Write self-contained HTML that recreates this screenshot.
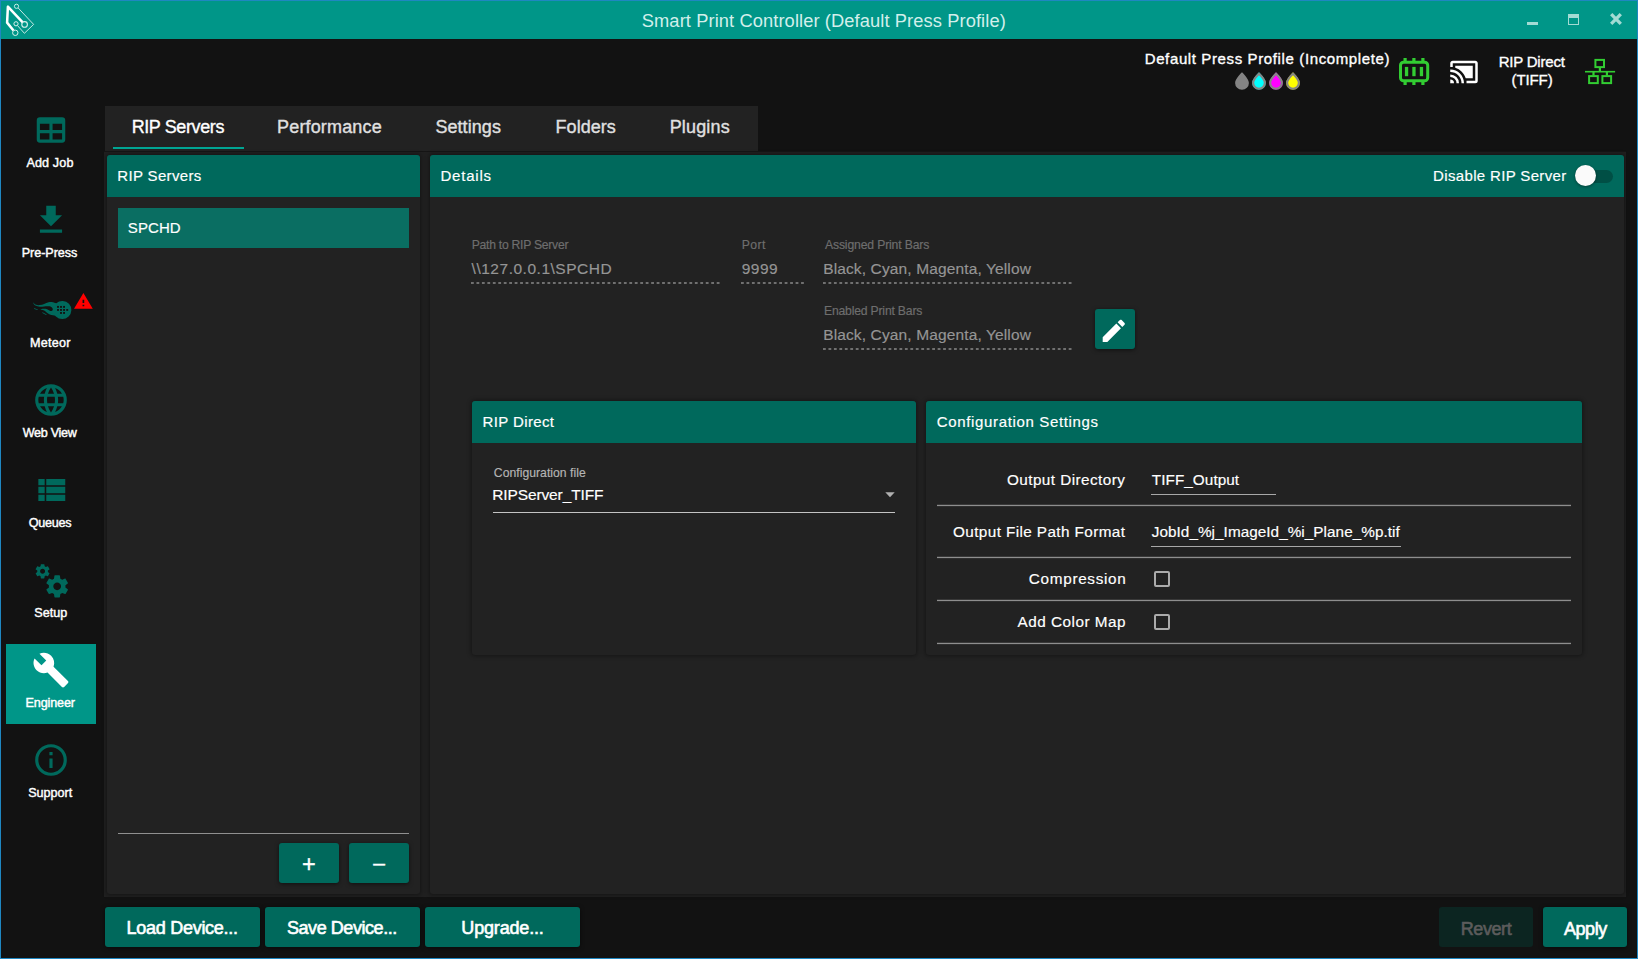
<!DOCTYPE html>
<html lang="en">
<head>
<meta charset="utf-8">
<title>Smart Print Controller (Default Press Profile)</title>
<style>
*{box-sizing:border-box;margin:0;padding:0}
html,body{width:1638px;height:959px;overflow:hidden;background:#121212}
body{font-family:"Liberation Sans",sans-serif;color:#fff;position:relative}
.a{position:absolute}
.t{position:absolute;white-space:nowrap;line-height:1}
svg{position:absolute;overflow:visible}
#frame{position:absolute;left:0;top:0;width:1638px;height:959px;border:1px solid #1f87c1;z-index:50}
#titlebar{left:1px;top:1px;width:1636px;height:38px;background:#009688}
.card{position:absolute;background:#222;border-radius:3px;box-shadow:0 0 4px 1px rgba(0,0,0,.38)}
.hd{position:absolute;left:0;top:0;right:0;height:42px;background:#00695c;border-radius:3px 3px 0 0}
.btn{position:absolute;background:#00695c;border-radius:3px;box-shadow:0 1px 4px rgba(0,0,0,.55)}
.dot{position:absolute;height:2px;background:repeating-linear-gradient(90deg,#6c6c6c 0,#6c6c6c 2.8px,transparent 2.8px,transparent 5.46px)}
.row{position:absolute;left:937px;width:634px;height:1px;background:#8e8e8e;box-shadow:0 -1px 0 rgba(142,142,142,.22),0 1px 0 rgba(142,142,142,.12)}
.ul{position:absolute;height:1px;background:#a8a8a8}
.cb{position:absolute;left:1154px;width:16px;height:16px;border:2px solid #ababab;border-radius:2px}
</style>
</head>
<body>
<div class="a" id="titlebar"></div>
<svg style="left:0;top:0" width="44" height="40" viewBox="0 0 44 40" fill="none" stroke="#fff" stroke-linejoin="miter">
<path d="M22.7,22.4 L7.9,6.6 L7.1,22.6 L13.5,30.5" stroke-width="2.5" stroke-linejoin="round"/>
<circle cx="15.3" cy="32.8" r="2.7" stroke-width="1" stroke="#d9f2ee"/>
<circle cx="24.6" cy="24.4" r="2.8" stroke-width="1.1" stroke="#d9f2ee"/>
<circle cx="16.5" cy="6.3" r="2.1" stroke-width="0.9" stroke="#d9f2ee"/>
<circle cx="16" cy="23.8" r="2.1" stroke-width="1" stroke="#d9f2ee"/>
<path d="M18.2,8 L33.6,24.4 L24.4,33.3 L17.5,25.6" stroke-width="0.9" stroke="#d9f2ee"/>
</svg><div class="a" style="left:1527px;top:21.6px;width:11px;height:3.7px;background:#a3dbd4"></div>
<div class="a" style="left:1568px;top:14px;width:11px;height:11px;border:1px solid #a3dbd4;border-top-width:4px"></div>
<svg style="left:1610px;top:13px" width="12" height="12" viewBox="0 0 12 12"><path d="M1.2,1.2 L10.8,10.8 M10.8,1.2 L1.2,10.8" stroke="#a3dbd4" stroke-width="3.3" fill="none"/></svg>
<svg style="left:1396px;top:55px" width="36" height="34" viewBox="1396 55 36 34">
<rect x="1400.5" y="62.3" width="27.2" height="18.4" rx="3" fill="none" stroke="#32cd32" stroke-width="3"/>
<g fill="#32cd32">
<rect x="1403.5" y="58" width="3.2" height="4"/><rect x="1412.3" y="58" width="3.2" height="4"/><rect x="1421.3" y="58" width="3.2" height="4"/>
<rect x="1403.5" y="81" width="3.2" height="4"/><rect x="1412.3" y="81" width="3.2" height="4"/><rect x="1421.3" y="81" width="3.2" height="4"/>
<rect x="1404.9" y="66.9" width="3.3" height="9.3"/><rect x="1412.3" y="66.9" width="3.3" height="9.3"/><rect x="1419.8" y="66.9" width="3.3" height="9.3"/>
</g></svg><svg style="left:1449.00px;top:56.75px" width="30" height="30" viewBox="0 0 24 24"><path fill="#fff" d="M21,3H3C1.89,3 1,3.89 1,5V8H3V5H21V19H14V21H21A2,2 0 0,0 23,19V5C23,3.89 22.1,3 21,3M1,10V12A9,9 0 0,1 10,21H12C12,14.92 7.07,10 1,10M19,7H5V8.63C8.96,9.91 12.09,13.04 13.37,17H19M1,14V16A5,5 0 0,1 6,21H8A7,7 0 0,0 1,14M1,18V21H4A3,3 0 0,0 1,18Z"/></svg><svg style="left:1580px;top:55px" width="40" height="34" viewBox="1580 55 40 34">
<g fill="none" stroke="#32cd32" stroke-width="2">
<rect x="1595.4" y="59.9" width="8.6" height="7.2"/>
<rect x="1589.1" y="76.1" width="8.7" height="7"/>
<rect x="1602.4" y="76.1" width="8.7" height="7"/>
</g>
<g fill="#32cd32">
<rect x="1585" y="70.9" width="30.1" height="1.6"/>
<rect x="1598.8" y="68" width="2.2" height="3.5"/>
<rect x="1592.4" y="72" width="2.2" height="3.5"/>
<rect x="1605.8" y="72" width="2.2" height="3.5"/>
</g></svg><svg style="left:1235.0px;top:72.4px" width="14" height="18" viewBox="0 0 14 18"><path d="M7,0.3 C7,0.3 13.9,7 13.9,10.9 A6.9,6.9 0 0 1 0.1,10.9 C0.1,7 7,0.3 7,0.3 Z" fill="#848484"/></svg><svg style="left:1252.0px;top:72.4px" width="14" height="18" viewBox="0 0 14 18"><path d="M7,0.3 C7,0.3 13.9,7 13.9,10.9 A6.9,6.9 0 0 1 0.1,10.9 C0.1,7 7,0.3 7,0.3 Z" fill="#00ffff" opacity="0.75"/><g transform="translate(7 10.4) scale(0.85) translate(-7 -10.4)"><path d="M7,0.3 C7,0.3 13.9,7 13.9,10.9 A6.9,6.9 0 0 1 0.1,10.9 C0.1,7 7,0.3 7,0.3 Z" fill="#00ffff" stroke="#868686" stroke-width="2.5"/></g></svg><svg style="left:1269.0px;top:72.4px" width="14" height="18" viewBox="0 0 14 18"><path d="M7,0.3 C7,0.3 13.9,7 13.9,10.9 A6.9,6.9 0 0 1 0.1,10.9 C0.1,7 7,0.3 7,0.3 Z" fill="#ff00ff" opacity="0.75"/><g transform="translate(7 10.4) scale(0.85) translate(-7 -10.4)"><path d="M7,0.3 C7,0.3 13.9,7 13.9,10.9 A6.9,6.9 0 0 1 0.1,10.9 C0.1,7 7,0.3 7,0.3 Z" fill="#ff00ff" stroke="#868686" stroke-width="2.5"/></g></svg><svg style="left:1286.0px;top:72.4px" width="14" height="18" viewBox="0 0 14 18"><path d="M7,0.3 C7,0.3 13.9,7 13.9,10.9 A6.9,6.9 0 0 1 0.1,10.9 C0.1,7 7,0.3 7,0.3 Z" fill="#ffff00" opacity="0.75"/><g transform="translate(7 10.4) scale(0.85) translate(-7 -10.4)"><path d="M7,0.3 C7,0.3 13.9,7 13.9,10.9 A6.9,6.9 0 0 1 0.1,10.9 C0.1,7 7,0.3 7,0.3 Z" fill="#ffff00" stroke="#868686" stroke-width="2.5"/></g></svg>
<div class="a" style="left:6px;top:644px;width:90px;height:80px;background:#009688"></div>
<svg style="left:32.00px;top:110.70px" width="38" height="38" viewBox="0 0 24 24"><path fill="#00695c" d="M5,4H19A2,2 0 0,1 21,6V18A2,2 0 0,1 19,20H5A2,2 0 0,1 3,18V6A2,2 0 0,1 5,4M5,8V12H11V8H5M13,8V12H19V8H13M5,14V18H11V14H5M13,14V18H19V14H13Z"/></svg>
<svg style="left:32.00px;top:200.70px" width="38" height="38" viewBox="0 0 24 24"><path fill="#00695c" d="M5,20H19V18H5M19,9H15V3H9V9H5L12,16L19,9Z"/></svg>
<svg style="left:20px;top:285px" width="80" height="50" viewBox="20 285 80 50">
<path fill="#00695c" d="M32.84,302 C33.8,303.4 34.5,304.1 35.3,304.4 C36.8,305.1 38.3,305.2 39.7,305.1 C41.3,305 42.8,304.6 44.1,304.1 C45.7,303.5 47,302.7 48.5,302.3 C49.5,302 50.5,301.95 51.4,302 C52.6,302.1 53.5,302.5 54.4,302.8 L56.3,303.2 A9.07,9.07 0 1 1 55.9,316.4 C55.2,315.9 54.9,315.6 54.4,315.5 C53.4,315.3 52.4,315.2 51.4,314.9 C50.3,314.6 49.4,314.3 48.5,313.75 C47.4,313.1 46.5,312.1 45.6,311.4 C44.7,310.7 43.7,310.2 42.7,309.9 C41.9,309.7 41.1,309.5 40.3,309.4 C41.1,309 41.9,308.8 42.7,308.8 C43.7,308.7 44.7,308.7 45.6,308.8 C46.7,309 47.6,309.4 48.5,309.9 C49.1,310.3 49.7,310.8 50.3,311 C50.9,311.2 51.5,311.1 52,310.8 C52.5,310.4 52.8,309.9 52.8,309.4 C52.8,308.8 52.6,308.3 52.3,307.9 C51.9,307.3 51.4,306.9 50.9,306.7 C50.1,306.4 49.3,306.3 48.5,306.3 C47,306.25 45.6,306.3 44.1,306.4 C42.6,306.5 41.2,306.8 39.7,306.7 C38.2,306.6 36.7,306.2 35.3,305.5 C34.3,305 33.4,303.8 32.84,302 Z"/>
<path fill="#00695c" d="M33.9,308 L38,309.5 L37.4,310.1 L34.3,308.9 Z M42.1,312.1 L46.8,314.4 L46.1,315 L42.8,313.2 Z"/>
<g fill="#121212"><rect x="57.05" y="305.95" width="1.9" height="1.9"/><rect x="60.05" y="305.95" width="1.9" height="1.9"/><rect x="63.10" y="305.95" width="1.9" height="1.9"/><rect x="57.05" y="309.00" width="1.9" height="1.9"/><rect x="60.05" y="309.00" width="1.9" height="1.9"/><rect x="63.10" y="309.00" width="1.9" height="1.9"/><rect x="66.25" y="309.00" width="1.9" height="1.9"/><rect x="60.05" y="312.00" width="1.9" height="1.9"/><rect x="63.10" y="312.00" width="1.9" height="1.9"/></g>
</svg>
<svg style="left:74px;top:292.6px" width="18.8" height="15.8" viewBox="1 2 22 19" preserveAspectRatio="none"><path fill="#ff0000" d="M13,14H11V10H13M13,18H11V16H13M1,21H23L12,2L1,21Z"/></svg>
<svg style="left:32.00px;top:380.70px" width="38" height="38" viewBox="0 0 24 24"><path fill="#00695c" d="M16.36,14C16.44,13.34 16.5,12.68 16.5,12C16.5,11.32 16.44,10.66 16.36,10H19.74C19.9,10.64 20,11.31 20,12C20,12.69 19.9,13.36 19.74,14M14.59,19.56C15.19,18.45 15.65,17.25 15.97,16H18.92C17.96,17.65 16.43,18.93 14.59,19.56M14.34,14H9.66C9.56,13.34 9.5,12.68 9.5,12C9.5,11.32 9.56,10.65 9.66,10H14.34C14.43,10.65 14.5,11.32 14.5,12C14.5,12.68 14.43,13.34 14.34,14M12,19.96C11.17,18.76 10.5,17.43 10.09,16H13.91C13.5,17.43 12.83,18.76 12,19.96M8,8H5.08C6.03,6.34 7.57,5.06 9.4,4.44C8.8,5.55 8.35,6.75 8,8M5.08,16H8C8.35,17.25 8.8,18.45 9.4,19.56C7.57,18.93 6.03,17.65 5.08,16M4.26,14C4.1,13.36 4,12.69 4,12C4,11.31 4.1,10.64 4.26,10H7.64C7.56,10.66 7.5,11.32 7.5,12C7.5,12.68 7.56,13.34 7.64,14M12,4.03C12.83,5.23 13.5,6.57 13.91,8H10.09C10.5,6.57 11.17,5.23 12,4.03M18.92,8H15.97C15.65,6.75 15.19,5.55 14.59,4.44C16.43,5.07 17.96,6.34 18.92,8M12,2C6.47,2 2,6.5 2,12A10,10 0 0,0 12,22A10,10 0 0,0 22,12A10,10 0 0,0 12,2Z"/></svg>
<svg style="left:32.00px;top:470.70px" width="38" height="38" viewBox="0 0 24 24"><path fill="#00695c" d="M9,5V9H21V5M9,19H21V15H9M9,14H21V10H9M4,9H8V5H4M4,19H8V15H4M4,14H8V10H4V14Z"/></svg>
<svg style="left:32.00px;top:560.70px" width="38" height="38" viewBox="0 0 24 24"><path fill="#00695c" d="M15.9,18.45C17.25,18.45 18.35,17.35 18.35,16C18.35,14.65 17.25,13.55 15.9,13.55C14.54,13.55 13.45,14.65 13.45,16C13.45,17.35 14.54,18.45 15.9,18.45M21.1,16.68L22.58,17.84C22.71,17.95 22.75,18.13 22.66,18.29L21.26,20.71C21.17,20.86 21,20.92 20.83,20.86L19.09,20.16C18.73,20.44 18.33,20.67 17.91,20.85L17.64,22.7C17.62,22.87 17.47,23 17.3,23H14.5C14.32,23 14.18,22.87 14.15,22.7L13.89,20.85C13.46,20.67 13.07,20.44 12.71,20.16L10.96,20.86C10.81,20.92 10.62,20.86 10.54,20.71L9.14,18.29C9.05,18.13 9.09,17.95 9.22,17.84L10.7,16.68L10.65,16L10.7,15.31L9.22,14.16C9.09,14.05 9.05,13.86 9.14,13.71L10.54,11.29C10.62,11.13 10.81,11.07 10.96,11.13L12.71,11.84C13.07,11.56 13.46,11.32 13.89,11.15L14.15,9.29C14.18,9.13 14.32,9 14.5,9H17.3C17.47,9 17.62,9.13 17.64,9.29L17.91,11.15C18.33,11.32 18.73,11.56 19.09,11.84L20.83,11.13C21,11.07 21.17,11.13 21.26,11.29L22.66,13.71C22.75,13.86 22.71,14.05 22.58,14.16L21.1,15.31L21.15,16L21.1,16.68M6.69,8.07C7.56,8.07 8.26,7.37 8.26,6.5C8.26,5.63 7.56,4.92 6.69,4.92A1.58,1.58 0 0,0 5.11,6.5C5.11,7.37 5.82,8.07 6.69,8.07M10.03,6.94L11,7.68C11.07,7.75 11.09,7.87 11.03,7.97L10.13,9.53C10.08,9.63 9.96,9.67 9.86,9.63L8.74,9.18L8,9.62L7.81,10.81C7.79,10.92 7.7,11 7.59,11H5.79C5.67,11 5.58,10.92 5.56,10.81L5.4,9.62L4.64,9.18L3.5,9.63C3.41,9.67 3.3,9.63 3.24,9.53L2.34,7.97C2.28,7.87 2.31,7.75 2.39,7.68L3.34,6.94L3.31,6.5L3.34,6.06L2.39,5.32C2.31,5.25 2.28,5.13 2.34,5.03L3.24,3.47C3.3,3.37 3.41,3.33 3.5,3.37L4.63,3.82L5.4,3.38L5.56,2.19C5.58,2.08 5.67,2 5.79,2H7.59C7.7,2 7.79,2.08 7.81,2.19L8,3.38L8.74,3.82L9.86,3.37C9.96,3.33 10.08,3.37 10.13,3.47L11.03,5.03C11.09,5.13 11.07,5.25 11,5.32L10.03,6.06L10.06,6.5L10.03,6.94Z"/></svg>
<svg style="left:32.00px;top:650.70px" width="38" height="38" viewBox="0 0 24 24"><path fill="#fff" d="M22.7,19L13.6,9.9C14.5,7.6 14,4.9 12.1,3C10.1,1 7.1,0.6 4.7,1.7L9,6L6,9L1.6,4.7C0.4,7.1 0.9,10.1 2.9,12.1C4.8,14 7.5,14.5 9.8,13.6L18.9,22.7C19.3,23.1 19.9,23.1 20.3,22.7L22.6,20.4C23.1,20 23.1,19.3 22.7,19Z"/></svg>
<svg style="left:32.00px;top:740.70px" width="38" height="38" viewBox="0 0 24 24"><path fill="#00695c" d="M11,9H13V7H11M12,20C7.59,20 4,16.41 4,12C4,7.59 7.59,4 12,4C16.41,4 20,7.59 20,12C20,16.41 16.41,20 12,20M12,2A10,10 0 0,0 2,12A10,10 0 0,0 12,22A10,10 0 0,0 22,12A10,10 0 0,0 12,2M11,17H13V11H11V17Z"/></svg>
<div class="a" style="left:105px;top:106px;width:653px;height:45px;background:#222"></div>
<div class="a" style="left:104px;top:151px;width:1522px;height:1px;background:#151515"></div>
<div class="a" style="left:104px;top:152px;width:1522px;height:745px;background:#202020"></div>
<div class="a" style="left:113px;top:147px;width:131px;height:2px;background:#00a593"></div>

<div class="card" style="left:107px;top:155px;width:313px;height:739px"><div class="hd"></div></div>
<div class="a" style="left:118px;top:208px;width:291px;height:40px;background:#0a6e62"></div>
<div class="a" style="left:118px;top:833px;width:291px;height:1px;background:#909090"></div>
<div class="btn" style="left:279px;top:843px;width:60px;height:40px"></div>
<div class="btn" style="left:349px;top:843px;width:60px;height:40px"></div>

<div class="card" style="left:430px;top:155px;width:1194px;height:739px"><div class="hd"></div></div>
<div class="a" style="left:1578px;top:169.5px;width:35px;height:13px;border-radius:7px;background:#004f45"></div>
<div class="a" style="left:1575px;top:165px;width:21px;height:21px;border-radius:50%;background:#fafafa;box-shadow:0 1px 3px rgba(0,0,0,.4)"></div>

<svg style="left:471px;top:282px" width="249" height="2" viewBox="0 0 249 2"><line x1="0" y1="1" x2="249" y2="1" stroke="#707070" stroke-width="2" stroke-dasharray="2.8 2.66"/></svg>
<svg style="left:741px;top:282px" width="63" height="2" viewBox="0 0 63 2"><line x1="0" y1="1" x2="63" y2="1" stroke="#707070" stroke-width="2" stroke-dasharray="2.8 2.66"/></svg>
<svg style="left:823px;top:282px" width="249" height="2" viewBox="0 0 249 2"><line x1="0" y1="1" x2="249" y2="1" stroke="#707070" stroke-width="2" stroke-dasharray="2.8 2.66"/></svg>
<svg style="left:823px;top:348px" width="249" height="2" viewBox="0 0 249 2"><line x1="0" y1="1" x2="249" y2="1" stroke="#707070" stroke-width="2" stroke-dasharray="2.8 2.66"/></svg>
<div class="btn" style="left:1095px;top:309px;width:40px;height:40px"></div>
<svg style="left:1099.40px;top:315.80px" width="29.6" height="29.6" viewBox="0 0 24 24"><path fill="#fff" d="M20.71,7.04C21.1,6.65 21.1,6 20.71,5.63L18.37,3.29C18,2.9 17.35,2.9 16.96,3.29L15.12,5.12L18.87,8.87M3,17.25V21H6.75L17.81,9.93L14.06,6.18L3,17.25Z"/></svg>

<div class="card" style="left:472px;top:401px;width:444px;height:254px"><div class="hd"></div></div>
<div class="ul" style="left:493px;top:512px;width:402px;background:#c4c4c4"></div>
<svg style="left:885px;top:492px" width="10" height="6" viewBox="0 0 10 6"><path d="M0.3,0.2 H9.7 L5,5.2 Z" fill="#b0b0b0"/></svg>

<div class="card" style="left:926px;top:401px;width:656px;height:254px"><div class="hd"></div></div>
<div class="row" style="top:505px"></div>
<div class="row" style="top:557px"></div>
<div class="row" style="top:600px"></div>
<div class="row" style="top:643px"></div>
<div class="ul" style="left:1151px;top:494px;width:125px"></div>
<div class="ul" style="left:1151px;top:546px;width:250px"></div>
<div class="cb" style="top:571px"></div>
<div class="cb" style="top:614px"></div>

<div class="btn" style="left:105px;top:907px;width:155px;height:40px"></div>
<div class="btn" style="left:265px;top:907px;width:155px;height:40px"></div>
<div class="btn" style="left:425px;top:907px;width:155px;height:40px"></div>
<div class="btn" style="left:1439px;top:907px;width:94px;height:40px;background:#0c2521;box-shadow:none"></div>
<div class="btn" style="left:1543px;top:907px;width:84px;height:40px"></div>
<div class="t" id="title" style="left:641.75px;top:11.81px;font-size:18.3px;color:#d3efeb;letter-spacing:0.098px;">Smart Print Controller (Default Press Profile)</div>
<div class="t" id="prof" style="left:1144.71px;top:51.20px;font-size:15px;color:#fff;letter-spacing:0.622px;-webkit-text-stroke:0.35px currentColor;">Default Press Profile (Incomplete)</div>
<div class="t" id="rd1" style="left:1498.71px;top:53.90px;font-size:15px;color:#fff;letter-spacing:-0.214px;-webkit-text-stroke:0.35px currentColor;">RIP Direct</div>
<div class="t" id="rd2" style="left:1511.55px;top:72.20px;font-size:15px;color:#fff;letter-spacing:-0.111px;-webkit-text-stroke:0.35px currentColor;">(TIFF)</div>
<div class="t" id="nav0" style="left:26.46px;top:157.13px;font-size:12.6px;color:#fff;letter-spacing:0.122px;-webkit-text-stroke:0.42px currentColor;">Add Job</div>
<div class="t" id="nav1" style="left:21.75px;top:247.13px;font-size:12.6px;color:#fff;letter-spacing:-0.061px;-webkit-text-stroke:0.42px currentColor;">Pre-Press</div>
<div class="t" id="nav2" style="left:30.05px;top:337.13px;font-size:12.6px;color:#fff;letter-spacing:0.239px;-webkit-text-stroke:0.42px currentColor;">Meteor</div>
<div class="t" id="nav3" style="left:22.75px;top:427.13px;font-size:12.6px;color:#fff;letter-spacing:-0.321px;-webkit-text-stroke:0.42px currentColor;">Web View</div>
<div class="t" id="nav4" style="left:28.80px;top:517.13px;font-size:12.6px;color:#fff;letter-spacing:-0.272px;-webkit-text-stroke:0.42px currentColor;">Queues</div>
<div class="t" id="nav5" style="left:34.25px;top:607.13px;font-size:12.6px;color:#fff;letter-spacing:-0.006px;-webkit-text-stroke:0.42px currentColor;">Setup</div>
<div class="t" id="nav6" style="left:25.55px;top:697.13px;font-size:12.6px;color:#fff;letter-spacing:-0.147px;-webkit-text-stroke:0.42px currentColor;">Engineer</div>
<div class="t" id="nav7" style="left:28.25px;top:787.13px;font-size:12.6px;color:#fff;letter-spacing:-0.027px;-webkit-text-stroke:0.42px currentColor;">Support</div>
<div class="t" id="tab0" style="left:131.65px;top:117.66px;font-size:18px;color:#fff;letter-spacing:-0.395px;-webkit-text-stroke:0.35px currentColor;">RIP Servers</div>
<div class="t" id="tab1" style="left:277.10px;top:117.66px;font-size:18px;color:#e0e0e0;letter-spacing:0.150px;-webkit-text-stroke:0.35px currentColor;">Performance</div>
<div class="t" id="tab2" style="left:435.40px;top:117.66px;font-size:18px;color:#e0e0e0;letter-spacing:0.065px;-webkit-text-stroke:0.35px currentColor;">Settings</div>
<div class="t" id="tab3" style="left:555.55px;top:117.66px;font-size:18px;color:#e0e0e0;letter-spacing:0.045px;-webkit-text-stroke:0.35px currentColor;">Folders</div>
<div class="t" id="tab4" style="left:669.65px;top:117.66px;font-size:18px;color:#e0e0e0;letter-spacing:0.167px;-webkit-text-stroke:0.35px currentColor;">Plugins</div>
<div class="t" id="h1" style="left:117.35px;top:168.20px;font-size:15px;color:#fff;letter-spacing:0.336px;-webkit-text-stroke:0.17px currentColor;">RIP Servers</div>
<div class="t" id="h2" style="left:440.50px;top:168.20px;font-size:15px;color:#fff;letter-spacing:0.782px;-webkit-text-stroke:0.17px currentColor;">Details</div>
<div class="t" id="dis" style="left:1433.05px;top:168.00px;font-size:15px;color:#fff;letter-spacing:0.348px;-webkit-text-stroke:0.17px currentColor;">Disable RIP Server</div>
<div class="t" id="spchd" style="left:127.85px;top:220.10px;font-size:15px;color:#fff;letter-spacing:0.084px;-webkit-text-stroke:0.17px currentColor;">SPCHD</div>
<div class="t" id="l1" style="left:471.75px;top:238.97px;font-size:12.2px;color:#6e6e6e;letter-spacing:-0.276px;-webkit-text-stroke:0.17px currentColor;">Path to RIP Server</div>
<div class="t" id="v1" style="left:471.60px;top:261.28px;font-size:15.5px;color:#959595;letter-spacing:0.515px;-webkit-text-stroke:0.17px currentColor;">\\127.0.0.1\SPCHD</div>
<div class="t" id="l2" style="left:741.65px;top:238.97px;font-size:12.2px;color:#6e6e6e;letter-spacing:0.447px;-webkit-text-stroke:0.17px currentColor;">Port</div>
<div class="t" id="v2" style="left:741.71px;top:261.28px;font-size:15.5px;color:#959595;letter-spacing:0.472px;-webkit-text-stroke:0.17px currentColor;">9999</div>
<div class="t" id="l3" style="left:824.96px;top:238.97px;font-size:12.2px;color:#6e6e6e;letter-spacing:-0.146px;-webkit-text-stroke:0.17px currentColor;">Assigned Print Bars</div>
<div class="t" id="v3" style="left:823.21px;top:261.28px;font-size:15.5px;color:#959595;letter-spacing:0.128px;-webkit-text-stroke:0.17px currentColor;">Black, Cyan, Magenta, Yellow</div>
<div class="t" id="l4" style="left:823.96px;top:304.97px;font-size:12.2px;color:#6e6e6e;letter-spacing:-0.189px;-webkit-text-stroke:0.17px currentColor;">Enabled Print Bars</div>
<div class="t" id="v4" style="left:823.21px;top:327.28px;font-size:15.5px;color:#959595;letter-spacing:0.128px;-webkit-text-stroke:0.17px currentColor;">Black, Cyan, Magenta, Yellow</div>
<div class="t" id="h3" style="left:482.50px;top:414.30px;font-size:15px;color:#fff;letter-spacing:0.385px;-webkit-text-stroke:0.17px currentColor;">RIP Direct</div>
<div class="t" id="h4" style="left:936.75px;top:414.30px;font-size:15px;color:#fff;letter-spacing:0.651px;-webkit-text-stroke:0.17px currentColor;">Configuration Settings</div>
<div class="t" id="cfl" style="left:493.85px;top:466.77px;font-size:12.2px;color:#b4b4b4;letter-spacing:0.026px;-webkit-text-stroke:0.17px currentColor;">Configuration file</div>
<div class="t" id="cfv" style="left:492.25px;top:487.48px;font-size:15.5px;color:#fff;letter-spacing:-0.121px;-webkit-text-stroke:0.17px currentColor;">RIPServer_TIFF</div>
<div class="t" id="c1l" style="left:1006.90px;top:472.35px;font-size:15.3px;color:#fff;letter-spacing:0.445px;-webkit-text-stroke:0.17px currentColor;">Output Directory</div>
<div class="t" id="c1v" style="left:1151.75px;top:472.35px;font-size:15.3px;color:#fff;letter-spacing:0.063px;-webkit-text-stroke:0.17px currentColor;">TIFF_Output</div>
<div class="t" id="c2l" style="left:953.00px;top:523.95px;font-size:15.3px;color:#fff;letter-spacing:0.399px;-webkit-text-stroke:0.17px currentColor;">Output File Path Format</div>
<div class="t" id="c2v" style="left:1151.75px;top:523.95px;font-size:15.3px;color:#fff;letter-spacing:0.044px;-webkit-text-stroke:0.17px currentColor;">JobId_%j_ImageId_%i_Plane_%p.tif</div>
<div class="t" id="c3l" style="left:1028.85px;top:571.25px;font-size:15.3px;color:#fff;letter-spacing:0.683px;-webkit-text-stroke:0.17px currentColor;">Compression</div>
<div class="t" id="c4l" style="left:1017.50px;top:614.05px;font-size:15.3px;color:#fff;letter-spacing:0.498px;-webkit-text-stroke:0.17px currentColor;">Add Color Map</div>
<div class="t" id="plus" style="left:302.10px;top:853.41px;font-size:23.5px;color:#fff;letter-spacing:0.000px;-webkit-text-stroke:0.35px currentColor;">+</div>
<div class="t" id="minus" style="left:373.15px;top:851.92px;font-size:21px;color:#fff;letter-spacing:0.000px;-webkit-text-stroke:0.42px currentColor;">–</div>
<div class="t" id="b1" style="left:126.55px;top:918.56px;font-size:18px;color:#fff;letter-spacing:-0.276px;-webkit-text-stroke:0.6px currentColor;">Load Device...</div>
<div class="t" id="b2" style="left:287.00px;top:918.56px;font-size:18px;color:#fff;letter-spacing:-0.447px;-webkit-text-stroke:0.6px currentColor;">Save Device...</div>
<div class="t" id="b3" style="left:461.35px;top:918.56px;font-size:18px;color:#fff;letter-spacing:-0.179px;-webkit-text-stroke:0.6px currentColor;">Upgrade...</div>
<div class="t" id="b4" style="left:1460.75px;top:919.66px;font-size:18px;color:#5c5c5c;letter-spacing:-0.413px;-webkit-text-stroke:0.6px currentColor;">Revert</div>
<div class="t" id="b5" style="left:1564.00px;top:919.66px;font-size:18px;color:#fff;letter-spacing:-0.446px;-webkit-text-stroke:0.6px currentColor;">Apply</div>
<div id="frame"></div>
</body>
</html>
